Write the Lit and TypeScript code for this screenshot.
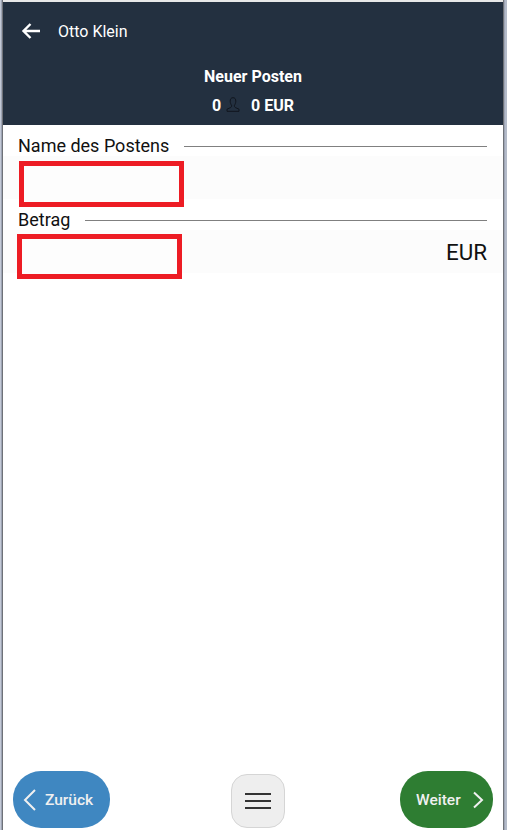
import { LitElement, html, css } from "lit";
import { customElement } from "lit/decorators.js";

@customElement("app-root")
export class AppRoot extends LitElement {
  static styles = css`
    :host {
      display: block;
      width: 507px;
      height: 830px;
      font-family: Roboto, "Liberation Sans", sans-serif;
      background: #fff;
      color: #111;
    }
    .frame {
      box-sizing: border-box;
      width: 507px;
      height: 830px;
      padding: 2px 4px 0 3px;
      background:
        linear-gradient(90deg, #c3c9d6 0 1px, #9ea5b5 1px 2px, #6f7278 2px 3px) left top / 3px 100% no-repeat,
        linear-gradient(90deg, #6f7278 0 1px, #9ea5b5 1px 2px, #b4bbc9 2px 4px) right top / 4px 100% no-repeat,
        linear-gradient(#e8e8e8, #e8e8e8) left top / 100% 2px no-repeat,
        #fff;
      display: flex;
      flex-direction: column;
    }
    header {
      background: #233040;
      height: 123px;
      color: #fff;
      flex: none;
    }
    .top {
      display: flex;
      align-items: center;
      height: 58px;
      padding-left: 18px;
      font-size: 16px;
      font-weight: 400;
    }
    .top svg {
      margin-right: 17px;
    }
    .title {
      text-align: center;
      font-size: 16px;
      font-weight: 700;
      line-height: 20px;
      margin-top: 7px;
    }
    .stats {
      display: flex;
      justify-content: center;
      align-items: center;
      gap: 5px;
      font-size: 16px;
      font-weight: 700;
      line-height: 20px;
      margin-top: 9px;
    }
    .stats svg {
      margin-top: -3px;
    }
    .stats .eur {
      margin-left: 6px;
    }
    main {
      flex: 1;
      display: flex;
      flex-direction: column;
      padding-top: 10px;
    }
    .legend {
      display: flex;
      align-items: center;
      padding: 0 16px 0 15px;
      height: 21px;
      font-size: 18px;
      gap: 15px;
    }
    .legend .line {
      flex: 1;
      height: 1px;
      background: #808080;
      margin-top: 2px;
    }
    .second {
      margin-top: 10px;
    }
    .field {
      height: 43px;
      background: #fcfcfc;
      display: flex;
      align-items: center;
      justify-content: space-between;
      padding-right: 16px;
      font-size: 22.4px;
    }
    .redbox {
      box-sizing: border-box;
      border: 5px solid #ed1c24;
      width: 165px;
      background: #fdfdfd;
      align-self: flex-start;
    }
    .r1 {
      margin: 5px 0 0 16px;
      height: 46px;
    }
    .r2 {
      margin: 4px 0 0 14px;
      height: 45px;
    }
    footer {
      height: 58px;
      flex: none;
      display: flex;
      justify-content: space-between;
      align-items: flex-end;
      padding: 0 10px 2px 10px;
    }
    .btn {
      height: 57px;
      border-radius: 28px;
      color: #f0f0f0;
      display: flex;
      align-items: center;
      font-size: 15.5px;
      font-weight: 500;
    }
    .back {
      width: 97px;
      background: #3f87c1;
      padding-left: 10px;
      gap: 8px;
      box-sizing: border-box;
    }
    .next {
      width: 93px;
      background: #2e7d32;
      box-sizing: border-box;
      padding-left: 16px;
      gap: 11px;
    }
    .menu {
      box-sizing: border-box;
      width: 54px;
      height: 54px;
      border-radius: 16px;
      background: #eeeeee;
      border: 1px solid #d5d5d5;
      display: flex;
      align-items: center;
      justify-content: center;
      margin-left: 6px;
    }
  `;

  render() {
    return html`
      <div class="frame">
        <header>
          <div class="top">
            <svg width="20" height="18" viewBox="0 0 20 18" fill="none" stroke="#fff" stroke-width="2.4">
              <path d="M19 9H3M9.500 2 2.500 9l7 7" />
            </svg>
            <span>Otto Klein</span>
          </div>
          <div class="title">Neuer Posten</div>
          <div class="stats">
            <span>0</span>
            <svg width="14" height="15" viewBox="0 0 14 15" fill="none" stroke="#10151d" stroke-width="1">
              <path d="M7 .7C5 .7 4.200 2.200 4.200 4.200c0 1.600.7 3.200 1.300 4 .3 1-.1 2-1 2.400L1 12.200V14.300h12v-2.100l-3.500-1.600c-.9-.4-1.300-1.400-1-2.400.6-.8 1.300-2.400 1.300-4C9.800 2.200 9 .7 7 .7z" />
            </svg>
            <span class="eur">0 EUR</span>
          </div>
        </header>
        <main>
          <div class="legend"><span>Name des Postens</span><span class="line"></span></div>
          <div class="field"><div class="redbox r1"></div></div>
          <div class="legend second"><span>Betrag</span><span class="line"></span></div>
          <div class="field"><div class="redbox r2"></div><span>EUR</span></div>
        </main>
        <footer>
          <div class="btn back">
            <svg width="14" height="24" viewBox="0 0 14 24" fill="none" stroke="#f0f0f0" stroke-width="2">
              <path d="M12 2 2 12l10 10" />
            </svg>
            <span>Zurück</span>
          </div>
          <div class="menu">
            <svg width="26" height="16" viewBox="0 0 26 16" fill="none" stroke="#333" stroke-width="2">
              <path d="M0 1h26M0 8h26M0 15h26" />
            </svg>
          </div>
          <div class="btn next">
            <span>Weiter</span>
            <svg width="12" height="20" viewBox="0 0 12 20" fill="none" stroke="#f0f0f0" stroke-width="2">
              <path d="M2 2.500l8 7.500-8 7.500" />
            </svg>
          </div>
        </footer>
      </div>
    `;
  }
}
